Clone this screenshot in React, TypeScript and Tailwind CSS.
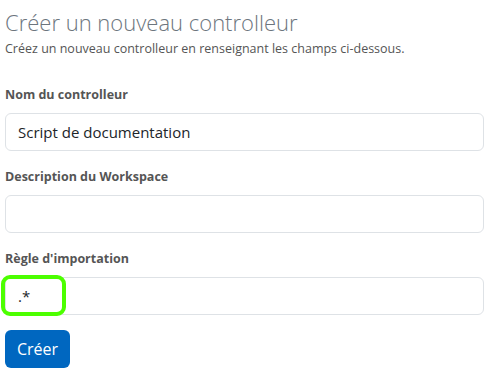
import { useState } from 'react';

function Field({ label, value, highlight }: { label: string; value: string; highlight?: boolean }) {
  const [v, setV] = useState(value);
  return (
    <div className="mt-[16px] first:mt-0">
      <label className="block text-[12.5px] font-bold text-[#555555] leading-[20px] mb-[8px]">{label}</label>
      <div className="relative">
        <input
          value={v}
          onChange={(e) => setV(e.target.value)}
          className="w-full h-[38px] rounded-[6px] border border-[#dee2e6] bg-white px-[12px] text-[15px] text-[#212529] outline-none"
        />
        {highlight && (
          <div className="absolute left-[-4px] top-[-2px] w-[65px] h-[41px] rounded-[9px] border-[4px] border-[#4cff00] pointer-events-none" />
        )}
      </div>
    </div>
  );
}

export default function App() {
  return (
    <div className="bg-white w-[494px] h-[377px] px-[5px] pt-[6px]" style={{ fontFamily: '"Open Sans", "Noto Sans", sans-serif' }}>
      <h1 className="text-[22px] font-light text-[#6c757d] leading-[32px]">Créer un nouveau controlleur</h1>
      <p className="text-[12.5px] text-[#555555] leading-[18px] mt-[2px]">Créez un nouveau controlleur en renseignant les champs ci-dessous.</p>

      <div className="mt-[27px] w-[479px]">
        <Field label="Nom du controlleur" value="Script de documentation" />
        <Field label="Description du Workspace" value="" />
        <Field label="Règle d'importation" value=".*" highlight />
      </div>

      <button className="mt-[15px] h-[38px] px-[12px] rounded-[6px] bg-[#0067c0] text-white text-[16px]">Créer</button>
    </div>
  );
}
